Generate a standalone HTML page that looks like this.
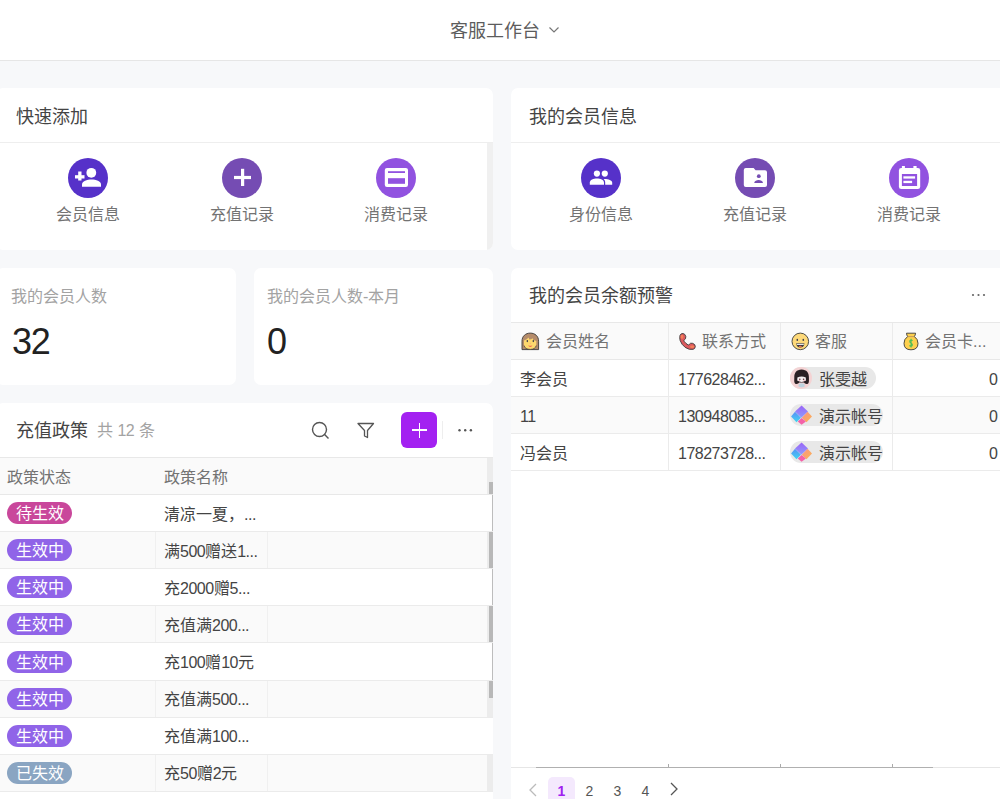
<!DOCTYPE html>
<html lang="zh-CN">
<head>
<meta charset="utf-8">
<style>
*{box-sizing:border-box;margin:0;padding:0}
html,body{width:1000px;height:799px;overflow:hidden}
body{background:#f7f8fa;font-family:"Liberation Sans",sans-serif;position:relative;color:#333}
.a{position:absolute}
.t{position:absolute;white-space:nowrap;line-height:20px}
.card{position:absolute;background:#fff;border-radius:7px;overflow:hidden}
.hdr{position:absolute;left:0;top:0;width:1000px;height:61px;background:#fff;border-bottom:1px solid #e6e6e6}
.dg{letter-spacing:-0.5px}
.f18{font-size:18px}
.f16{font-size:16px}
.circ{position:absolute;width:40px;height:40px;border-radius:50%}
.lbl{position:absolute;font-size:16px;line-height:20px;color:#737373;white-space:nowrap;width:100px;text-align:center}
</style>
</head>
<body>
<div class="hdr"></div>
<div class="t f18" style="left:450px;top:21px;color:#5c5c5c">客服工作台</div>
<svg class="a" style="left:548px;top:25px" width="12" height="10" viewBox="0 0 12 10"><path d="M1.5 2.5 L6 7 L10.5 2.5" fill="none" stroke="#777" stroke-width="1.2"/></svg>

<!-- card 1 quick add -->
<div class="card" style="left:-4px;top:88px;width:497px;height:162px">
  <div class="a" style="left:0;top:54px;width:497px;height:1px;background:#eee"></div>
  <div class="a" style="left:491px;top:55px;width:6px;height:107px;background:#f0f0f0"></div>
</div>
<div class="t f18" style="left:16px;top:107px;color:#444">快速添加</div>

<!-- card 2 my member info -->
<div class="card" style="left:511px;top:88px;width:500px;height:162px">
  <div class="a" style="left:0;top:54px;width:500px;height:1px;background:#eee"></div>
</div>
<div class="t f18" style="left:529px;top:107px;color:#444">我的会员信息</div>


<!-- quick add icons -->
<svg class="a" style="left:68px;top:158px" width="40" height="40" viewBox="0 0 40 40"><circle cx="20" cy="20" r="20" fill="#5631c9"/>
<rect x="7" y="17.2" width="9.5" height="3.3" fill="#fff"/><rect x="10.2" y="13.5" width="3.3" height="9" fill="#fff"/>
<circle cx="23.3" cy="14.8" r="4.9" fill="#fff"/><path d="M14 28.8 V26.5 C14 23.2 19 21.5 23.5 21.5 C28 21.5 33 23.2 33 26.5 V28.8 Z" fill="#fff"/></svg>
<div class="lbl" style="left:38px;top:205px">会员信息</div>
<svg class="a" style="left:222px;top:158px" width="40" height="40" viewBox="0 0 40 40"><circle cx="20" cy="20" r="20" fill="#754cb3"/>
<rect x="12" y="17.9" width="17" height="3.2" fill="#fff"/><rect x="19" y="10.8" width="3.2" height="17.2" fill="#fff"/></svg>
<div class="lbl" style="left:192px;top:205px">充值记录</div>
<svg class="a" style="left:376px;top:158px" width="40" height="40" viewBox="0 0 40 40"><circle cx="20" cy="20" r="20" fill="#9152e0"/>
<rect x="8.8" y="9.9" width="23.2" height="19.1" rx="2.2" fill="#fff"/><rect x="12" y="13.2" width="17" height="1.8" fill="#9152e0"/><rect x="12" y="20.2" width="17" height="5.6" fill="#9152e0"/></svg>
<div class="lbl" style="left:346px;top:205px">消费记录</div>

<!-- member info icons -->
<svg class="a" style="left:581px;top:158px" width="40" height="40" viewBox="0 0 40 40"><circle cx="20" cy="20" r="20" fill="#5631c9"/>
<circle cx="15.9" cy="15.6" r="3.1" fill="#fff"/><circle cx="23.8" cy="15.6" r="3.1" fill="#fff"/>
<path d="M8.8 26.7 V24.5 C8.8 21.8 12.5 20.4 15.9 20.4 C19.3 20.4 23 21.8 23 24.5 V26.7 Z" fill="#fff"/>
<path d="M24.2 26.7 V24.5 C24.2 23 23.6 21.8 22.6 21 C23 21 23.4 21 23.8 21 C27.2 21 31.2 22.2 31.2 24.5 V26.7 Z" fill="#fff"/></svg>
<div class="lbl" style="left:551px;top:205px">身份信息</div>
<svg class="a" style="left:735px;top:158px" width="40" height="40" viewBox="0 0 40 40"><circle cx="20" cy="20" r="20" fill="#754cb3"/>
<path d="M10.8 10 H18.6 L20.6 12.3 H30 Q32 12.3 32 14.3 V27 Q32 29 30 29 H10.8 Q8.8 29 8.8 27 V12 Q8.8 10 10.8 10 Z" fill="#fff"/>
<circle cx="23.8" cy="18.2" r="1.9" fill="#754cb3"/><path d="M19.2 25 C19.6 22.8 21.6 22 23.6 22 C25.6 22 27.6 22.8 28 25 Z" fill="#754cb3"/></svg>
<div class="lbl" style="left:705px;top:205px">充值记录</div>
<svg class="a" style="left:889px;top:158px" width="40" height="40" viewBox="0 0 40 40"><circle cx="20" cy="20" r="20" fill="#9152e0"/>
<rect x="9.9" y="10" width="21.3" height="21.1" rx="2.4" fill="#fff"/>
<rect x="12.9" y="8" width="3" height="3" fill="#fff"/><rect x="24.4" y="8" width="3.2" height="3" fill="#fff"/>
<rect x="12.9" y="16" width="15.2" height="12" fill="#9152e0"/>
<rect x="14.4" y="18.3" width="11.7" height="2.3" fill="#fff"/><rect x="14.4" y="22.8" width="8.7" height="2.3" fill="#fff"/></svg>
<div class="lbl" style="left:859px;top:205px">消费记录</div>

<!-- stats -->
<div class="card" style="left:-4px;top:268px;width:240px;height:117px"></div>
<div class="card" style="left:254px;top:268px;width:239px;height:117px"></div>
<div class="t f16" style="left:11px;top:287px;color:#a3a3a3">我的会员人数</div>
<div class="t" style="left:12px;top:322px;font-size:36px;line-height:40px;color:#222;letter-spacing:-1.2px">32</div>
<div class="t f16" style="left:267px;top:287px;color:#a3a3a3">我的会员人数-本月</div>
<div class="t" style="left:267px;top:322px;font-size:36px;line-height:40px;color:#222;letter-spacing:-1.2px">0</div>

<!-- policy card -->
<div class="card" style="left:-4px;top:403px;width:497px;height:500px"></div>
<div class="t f18" style="left:16px;top:421px;color:#444">充值政策</div>
<div class="t f16" style="left:97px;top:421px;color:#a3a3a3">共 <span class="dg">12</span> 条</div>


<!-- policy header tools -->
<svg class="a" style="left:310px;top:420px" width="22" height="22" viewBox="0 0 22 22"><circle cx="9.5" cy="9.5" r="7" fill="none" stroke="#555" stroke-width="1.4"/><path d="M14.6 14.6 L18.5 18.5" stroke="#555" stroke-width="1.4"/></svg>
<svg class="a" style="left:355px;top:420px" width="22" height="22" viewBox="0 0 22 22"><path d="M3 3.5 H18.5 L12.5 10.5 V17.5 L9.5 16 V10.5 Z" fill="none" stroke="#555" stroke-width="1.3" stroke-linejoin="round"/></svg>
<div class="a" style="left:401px;top:412px;width:36px;height:36px;border-radius:6px;background:#a321f1"></div>
<div class="a" style="left:412px;top:429px;width:15px;height:1.6px;background:#fff"></div>
<div class="a" style="left:418.7px;top:422.5px;width:1.6px;height:15px;background:#fff"></div>
<div class="a" style="left:442px;top:421px;width:1px;height:18px;background:#eee"></div>
<svg class="a" style="left:456px;top:427px" width="18" height="6" viewBox="0 0 18 6"><circle cx="3.5" cy="3.2" r="1.2" fill="#555"/><circle cx="9.2" cy="3.2" r="1.2" fill="#555"/><circle cx="14.9" cy="3.2" r="1.2" fill="#555"/></svg>
<!-- policy table -->
<div class="a" style="left:0;top:457px;width:493px;height:1px;background:#e8e8e8"></div>
<div class="a" style="left:0;top:458px;width:487px;height:36px;background:#fafafa"></div>
<div class="a" style="left:487px;top:458px;width:6px;height:36px;background:#ececec"></div>
<div class="a" style="left:489px;top:482px;width:4px;height:12px;background:#b8b8b8"></div>
<div class="a" style="left:0;top:494px;width:493px;height:1px;background:#e8e8e8"></div>
<div class="t f16" style="left:7px;top:468px;color:#737373">政策状态</div>
<div class="t f16" style="left:164px;top:468px;color:#737373">政策名称</div>
<div class="a" style="left:492px;top:495px;width:1px;height:36px;background:#bdbdbd"></div>
<div class="a" style="left:0;top:531px;width:493px;height:1px;background:#ebebeb"></div>
<div class="t" style="left:7px;top:502px;height:22px;line-height:24px;padding:0 8.5px;border-radius:11px;background:#c9479b;color:#fff;font-size:16px">待生效</div>
<div class="t f16" style="left:164px;top:505px;color:#444">清凉一夏，<span class="dg">...</span></div>
<div class="a" style="left:0;top:532px;width:487px;height:36px;background:#fafafa"></div>
<div class="a" style="left:155px;top:532px;width:1px;height:36px;background:#f0f0f0"></div>
<div class="a" style="left:267px;top:532px;width:1px;height:36px;background:#f0f0f0"></div>
<div class="a" style="left:487px;top:532px;width:6px;height:36px;background:#ececec"></div>
<div class="a" style="left:489px;top:532px;width:4px;height:36px;background:#b8b8b8"></div>
<div class="a" style="left:0;top:568px;width:493px;height:1px;background:#ebebeb"></div>
<div class="t" style="left:7px;top:539px;height:22px;line-height:24px;padding:0 8.5px;border-radius:11px;background:#9064e8;color:#fff;font-size:16px">生效中</div>
<div class="t f16" style="left:164px;top:542px;color:#444">满<span class="dg">500</span>赠送<span class="dg">1...</span></div>
<div class="a" style="left:492px;top:569px;width:1px;height:36px;background:#bdbdbd"></div>
<div class="a" style="left:0;top:605px;width:493px;height:1px;background:#ebebeb"></div>
<div class="t" style="left:7px;top:576px;height:22px;line-height:24px;padding:0 8.5px;border-radius:11px;background:#9064e8;color:#fff;font-size:16px">生效中</div>
<div class="t f16" style="left:164px;top:579px;color:#444">充<span class="dg">2000</span>赠<span class="dg">5...</span></div>
<div class="a" style="left:0;top:606px;width:487px;height:36px;background:#fafafa"></div>
<div class="a" style="left:155px;top:606px;width:1px;height:36px;background:#f0f0f0"></div>
<div class="a" style="left:267px;top:606px;width:1px;height:36px;background:#f0f0f0"></div>
<div class="a" style="left:487px;top:606px;width:6px;height:36px;background:#ececec"></div>
<div class="a" style="left:489px;top:606px;width:4px;height:36px;background:#b8b8b8"></div>
<div class="a" style="left:0;top:642px;width:493px;height:1px;background:#ebebeb"></div>
<div class="t" style="left:7px;top:613px;height:22px;line-height:24px;padding:0 8.5px;border-radius:11px;background:#9064e8;color:#fff;font-size:16px">生效中</div>
<div class="t f16" style="left:164px;top:616px;color:#444">充值满<span class="dg">200...</span></div>
<div class="a" style="left:492px;top:643px;width:1px;height:37px;background:#bdbdbd"></div>
<div class="a" style="left:0;top:680px;width:493px;height:1px;background:#ebebeb"></div>
<div class="t" style="left:7px;top:651px;height:22px;line-height:24px;padding:0 8.5px;border-radius:11px;background:#9064e8;color:#fff;font-size:16px">生效中</div>
<div class="t f16" style="left:164px;top:653px;color:#444">充<span class="dg">100</span>赠<span class="dg">10</span>元</div>
<div class="a" style="left:0;top:681px;width:487px;height:36px;background:#fafafa"></div>
<div class="a" style="left:155px;top:681px;width:1px;height:36px;background:#f0f0f0"></div>
<div class="a" style="left:267px;top:681px;width:1px;height:36px;background:#f0f0f0"></div>
<div class="a" style="left:487px;top:681px;width:6px;height:36px;background:#ececec"></div>
<div class="a" style="left:489px;top:681px;width:4px;height:17px;background:#b8b8b8"></div>
<div class="a" style="left:0;top:717px;width:493px;height:1px;background:#ebebeb"></div>
<div class="t" style="left:7px;top:688px;height:22px;line-height:24px;padding:0 8.5px;border-radius:11px;background:#9064e8;color:#fff;font-size:16px">生效中</div>
<div class="t f16" style="left:164px;top:690px;color:#444">充值满<span class="dg">500...</span></div>
<div class="a" style="left:0;top:754px;width:493px;height:1px;background:#ebebeb"></div>
<div class="t" style="left:7px;top:725px;height:22px;line-height:24px;padding:0 8.5px;border-radius:11px;background:#9064e8;color:#fff;font-size:16px">生效中</div>
<div class="t f16" style="left:164px;top:727px;color:#444">充值满<span class="dg">100...</span></div>
<div class="a" style="left:0;top:755px;width:487px;height:36px;background:#fafafa"></div>
<div class="a" style="left:155px;top:755px;width:1px;height:36px;background:#f0f0f0"></div>
<div class="a" style="left:267px;top:755px;width:1px;height:36px;background:#f0f0f0"></div>
<div class="a" style="left:487px;top:755px;width:6px;height:36px;background:#ececec"></div>
<div class="a" style="left:0;top:791px;width:493px;height:1px;background:#ebebeb"></div>
<div class="t" style="left:7px;top:762px;height:22px;line-height:24px;padding:0 8.5px;border-radius:11px;background:#8aa5c2;color:#fff;font-size:16px">已失效</div>
<div class="t f16" style="left:164px;top:764px;color:#444">充<span class="dg">50</span>赠<span class="dg">2</span>元</div>

<!-- warning card -->
<div class="card" style="left:511px;top:268px;width:500px;height:600px"></div>
<div class="t f18" style="left:529px;top:286px;color:#444">我的会员余额预警</div>


<svg class="a" style="left:968px;top:292px" width="20" height="6" viewBox="0 0 20 6"><circle cx="5" cy="3" r="1.1" fill="#666"/><circle cx="10.5" cy="3" r="1.1" fill="#666"/><circle cx="16" cy="3" r="1.1" fill="#666"/></svg>
<div class="a" style="left:511px;top:322px;width:489px;height:1px;background:#e8e8e8"></div>
<div class="a" style="left:511px;top:323px;width:489px;height:36px;background:#fafafa"></div>
<div class="a" style="left:511px;top:359px;width:489px;height:1px;background:#e8e8e8"></div>
<div class="a" style="left:511px;top:397px;width:489px;height:36px;background:#fafafa"></div>
<div class="a" style="left:511px;top:396px;width:489px;height:1px;background:#ebebeb"></div>
<div class="a" style="left:511px;top:433px;width:489px;height:1px;background:#ebebeb"></div>
<div class="a" style="left:511px;top:470px;width:489px;height:1px;background:#ebebeb"></div>
<div class="a" style="left:668px;top:323px;width:1px;height:147px;background:#ebebeb"></div>
<div class="a" style="left:780px;top:323px;width:1px;height:147px;background:#ebebeb"></div>
<div class="a" style="left:892px;top:323px;width:1px;height:147px;background:#ebebeb"></div>
<svg class="a" style="left:518px;top:330px" width="24" height="24" viewBox="0 0 24 24">
<path d="M4 19.6 V11.2 C4 6.2 7.6 3.1 12.3 3.1 C17 3.1 20.6 6.2 20.6 11.2 V19.6 Z" fill="#b58c6b" stroke="#3b3b3b" stroke-width="0.9"/>
<path d="M6 10.6 Q9 9.5 10.6 7.4 L11.3 9.6 Q13.5 9.4 14.6 8.2 L15.3 10 Q17 10.4 18.3 11 V14.8 C18.3 17.6 15.6 19.4 12.2 19.4 C8.8 19.4 6 17.6 6 14.8 Z" fill="#fdd86d"/>
<path d="M6 15.5 C6.5 18 9 19.4 12.2 19.4 C15.4 19.4 17.8 18 18.3 15.5" fill="none" stroke="#3b3b3b" stroke-width="0.7"/>
<ellipse cx="9.3" cy="11.1" rx="0.75" ry="1.1" fill="#3a3a48"/><ellipse cx="15.3" cy="11.1" rx="0.75" ry="1.1" fill="#3a3a48"/>
<path d="M10.2 15.2 Q12.3 16.2 14.4 15.2 Q14 17 12.3 17 Q10.6 17 10.2 15.2 Z" fill="#f0664f"/>
<circle cx="12.2" cy="13.3" r="0.5" fill="#f3a27a"/>
</svg>
<div class="t f16" style="left:546px;top:332px;color:#737373">会员姓名</div>
<svg class="a" style="left:676px;top:330px" width="24" height="24" viewBox="0 0 24 24">
<path d="M4 5.4 Q4.6 3.4 7 3.5 Q9.2 3.8 9.8 6.5 Q10 9.2 8.2 10 Q7.6 10.3 8 11.2 Q9.8 13.6 12.2 15 Q13 15.3 13.4 14.2 Q14.2 12.8 16.5 13.3 Q19.4 14.2 19.3 16.6 Q19 19 17.2 19.3 Q13.4 20.3 9.2 17.4 Q5.5 14.6 4.1 10.4 Q3.4 7.6 4 5.4 Z" fill="#dc5a5e" stroke="#3b3b3b" stroke-width="0.9" stroke-linejoin="round"/>
<ellipse cx="6" cy="6.8" rx="1.4" ry="2.1" fill="#f78258" opacity="0.9"/><ellipse cx="16.2" cy="16.8" rx="2.1" ry="1.4" fill="#f78258" opacity="0.9"/>
</svg>
<div class="t f16" style="left:702px;top:332px;color:#737373">联系方式</div>
<svg class="a" style="left:788px;top:330px" width="24" height="24" viewBox="0 0 24 24">
<circle cx="12.3" cy="11.4" r="8.3" fill="#fdd97a" stroke="#3b3b3b" stroke-width="0.9"/>
<ellipse cx="9.3" cy="9.9" rx="0.8" ry="1.1" fill="#3a3a48"/><ellipse cx="15.3" cy="9.9" rx="0.8" ry="1.1" fill="#3a3a48"/>
<path d="M8.2 13.3 H16.4 Q16 17.6 12.3 17.6 Q8.6 17.6 8.2 13.3 Z" fill="#3b3b3b"/>
<path d="M8.7 13.7 H15.9 L15.7 15 H8.9 Z" fill="#e6e6e6"/>
<ellipse cx="12.3" cy="16.5" rx="1.6" ry="0.7" fill="#f06a55"/>
</svg>
<div class="t f16" style="left:815px;top:332px;color:#737373">客服</div>
<svg class="a" style="left:899px;top:330px" width="24" height="24" viewBox="0 0 24 24">
<path d="M7.5 3.2 H16.6 Q16.4 5 15.4 6.6 Q19 9 19 13.3 Q19 19.8 12 19.8 Q5 19.8 5 13.3 Q5 9 8.6 6.6 Q7.6 5 7.5 3.2 Z" fill="#fdd04f" stroke="#3b3b3b" stroke-width="0.9" stroke-linejoin="round"/>
<path d="M8.6 6.6 H15.4" stroke="#b28b5e" stroke-width="0.8"/>
<path d="M13.6 10.6 Q12.8 9.8 11.8 10 Q10.6 10.3 10.8 11.6 Q11 12.6 12.2 13.2 Q13.4 13.8 13.4 15 Q13.2 16.4 11.8 16.2 Q10.9 16 10.5 15.4 M12.1 8.8 V17.4" fill="none" stroke="#4cbd58" stroke-width="1.1"/>
</svg>
<div class="t f16" style="left:925px;top:332px;color:#737373">会员卡...</div>
<div class="t f16" style="left:520px;top:370px;color:#444">李会员</div>
<div class="t f16" style="left:678px;top:370px;color:#444"><span class="dg">177628462...</span></div>
<div class="a" style="left:790px;top:367px;height:22px;width:86px;border-radius:11px;background:#e8e8e8"></div>
<svg class="a" style="left:790px;top:367px" width="22" height="22" viewBox="0 0 22 22">
<circle cx="11" cy="11" r="11" fill="#f4d3d4"/>
<path d="M11.6 2.4 C6.4 2.4 4.2 6 4.3 10.2 C4.4 12.8 3.8 14.8 5 16.4 C6.4 17.4 8.6 16.8 9.2 15.6 L14 15.6 C14.6 16.8 16.8 17.4 18.2 16.4 C19.4 14.8 18.8 12.8 18.9 10.2 C19 6 16.8 2.4 11.6 2.4 Z" fill="#2b2024"/>
<path d="M7.4 10.4 Q11.6 8.6 15.8 10.4 L16 13.6 Q11.6 16.4 7.2 13.6 Z" fill="#f5eef0"/>
<path d="M8.8 17 Q11.6 15.6 14.4 17 L14.8 19.6 Q11.6 21.2 8.4 19.6 Z" fill="#bed4e0"/>
<circle cx="9.8" cy="12.2" r="0.8" fill="#5a2a30"/><circle cx="13.6" cy="12.2" r="0.8" fill="#5a2a30"/>
<circle cx="9.3" cy="13.3" r="0.6" fill="#f0a0a8"/><circle cx="14.1" cy="13.3" r="0.6" fill="#f0a0a8"/></svg>
<div class="t f16" style="left:819px;top:370px;color:#444">张雯越</div>
<div class="t f16" style="left:902px;top:370px;width:96px;text-align:right;color:#444">0</div>
<div class="t f16" style="left:520px;top:407px;color:#444"><span class="dg">11</span></div>
<div class="t f16" style="left:678px;top:407px;color:#444"><span class="dg">130948085...</span></div>
<div class="a" style="left:790px;top:404px;height:22px;width:93px;border-radius:11px;background:#e8e8e8"></div>
<svg class="a" style="left:790px;top:404px" width="22" height="22" viewBox="0 0 22 22"><defs>
<linearGradient id="gp1" x1="0" y1="0" x2="0" y2="1"><stop offset="0" stop-color="#9a63f7"/><stop offset="1" stop-color="#8f9bfb"/></linearGradient>
<linearGradient id="gb1" x1="0" y1="0" x2="0" y2="1"><stop offset="0" stop-color="#5b8ef6"/><stop offset="1" stop-color="#3fd6f2"/></linearGradient>
<linearGradient id="go1" x1="0" y1="0" x2="1" y2="1"><stop offset="0" stop-color="#f8928a"/><stop offset="1" stop-color="#fdb54f"/></linearGradient></defs>
<path d="M11.6 1.5 L18 7.4 L11.3 13.7 L5 7.4 Z" fill="url(#gp1)"/>
<path d="M5 7.7 L11 13.7 L6.5 18.2 L1.1 12.4 Z" fill="url(#gb1)"/>
<path d="M17.6 7.8 L22 12.5 L16.5 18.2 L11.8 13.7 Z" fill="url(#go1)"/>
<path d="M11.6 13.9 L15.9 17.6 L11.6 20.8 L7.8 17.4 Z" fill="#f462a8"/></svg>
<div class="t f16" style="left:819px;top:407px;color:#444">演示帐号</div>
<div class="t f16" style="left:902px;top:407px;width:96px;text-align:right;color:#444">0</div>
<div class="t f16" style="left:520px;top:444px;color:#444">冯会员</div>
<div class="t f16" style="left:678px;top:444px;color:#444"><span class="dg">178273728...</span></div>
<div class="a" style="left:790px;top:441px;height:22px;width:93px;border-radius:11px;background:#e8e8e8"></div>
<svg class="a" style="left:790px;top:441px" width="22" height="22" viewBox="0 0 22 22"><defs>
<linearGradient id="gp2" x1="0" y1="0" x2="0" y2="1"><stop offset="0" stop-color="#9a63f7"/><stop offset="1" stop-color="#8f9bfb"/></linearGradient>
<linearGradient id="gb2" x1="0" y1="0" x2="0" y2="1"><stop offset="0" stop-color="#5b8ef6"/><stop offset="1" stop-color="#3fd6f2"/></linearGradient>
<linearGradient id="go2" x1="0" y1="0" x2="1" y2="1"><stop offset="0" stop-color="#f8928a"/><stop offset="1" stop-color="#fdb54f"/></linearGradient></defs>
<path d="M11.6 1.5 L18 7.4 L11.3 13.7 L5 7.4 Z" fill="url(#gp2)"/>
<path d="M5 7.7 L11 13.7 L6.5 18.2 L1.1 12.4 Z" fill="url(#gb2)"/>
<path d="M17.6 7.8 L22 12.5 L16.5 18.2 L11.8 13.7 Z" fill="url(#go2)"/>
<path d="M11.6 13.9 L15.9 17.6 L11.6 20.8 L7.8 17.4 Z" fill="#f462a8"/></svg>
<div class="t f16" style="left:819px;top:444px;color:#444">演示帐号</div>
<div class="t f16" style="left:902px;top:444px;width:96px;text-align:right;color:#444">0</div>

<div class="a" style="left:511px;top:767px;width:489px;height:1px;background:#e6e6e6"></div>
<div class="a" style="left:536px;top:767px;width:397px;height:1px;background:#b0b0b0"></div>
<div class="a" style="left:668px;top:764px;width:1px;height:3px;background:#aaa"></div>
<div class="a" style="left:780px;top:764px;width:1px;height:3px;background:#aaa"></div>
<div class="a" style="left:892px;top:764px;width:1px;height:3px;background:#aaa"></div>
<svg class="a" style="left:526px;top:782px" width="14" height="16" viewBox="0 0 14 16"><path d="M10 2 L4 8 L10 14" fill="none" stroke="#bbb" stroke-width="1.3"/></svg>
<div class="a" style="left:548px;top:777px;width:27px;height:30px;border-radius:5px;background:#f4e9fd"></div>
<div class="t" style="left:548px;top:781px;width:27px;text-align:center;font-size:14px;font-weight:bold;color:#a020f0">1</div>
<div class="t" style="left:576px;top:781px;width:27px;text-align:center;font-size:14px;color:#555">2</div>
<div class="t" style="left:604px;top:781px;width:27px;text-align:center;font-size:14px;color:#555">3</div>
<div class="t" style="left:632px;top:781px;width:27px;text-align:center;font-size:14px;color:#555">4</div>
<svg class="a" style="left:667px;top:781px" width="14" height="16" viewBox="0 0 14 16"><path d="M4 2 L10 8 L4 14" fill="none" stroke="#555" stroke-width="1.3"/></svg>

</body>
</html>
